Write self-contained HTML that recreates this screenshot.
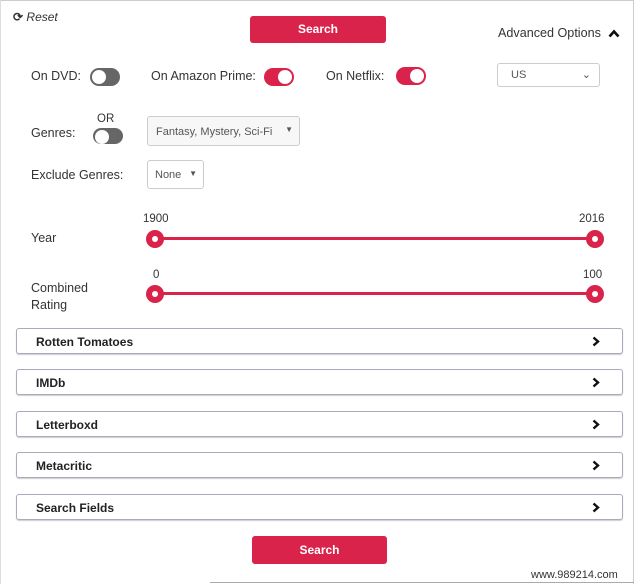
<!DOCTYPE html><html><head><style>
body{margin:0;width:638px;height:584px;background:#fff;font-family:"Liberation Sans",sans-serif;color:#333;position:relative;overflow:hidden}
.a{position:absolute}
.btn{position:absolute;background:#d9234b;color:#fff;border-radius:3px;font-size:12px;text-align:center;font-weight:bold}
.lbl{position:absolute;font-size:12.5px;color:#333}
.tg{position:absolute;width:30px;height:18px;border-radius:9px;background:#666}
.tg::after{content:"";position:absolute;top:2px;width:14px;height:14px;border-radius:50%;background:#fff}
.off::after{left:2px}.on{background:#d9234b}.on::after{right:2px}
.sel{position:absolute;border:1px solid #ccc;border-radius:3px;background:#f7f7f7;font-size:11px;color:#555;box-sizing:border-box}
.acc{position:absolute;left:16px;width:607px;height:26px;border:1px solid #aab;border-radius:3px;box-sizing:border-box;font-size:12px;font-weight:bold;color:#222;box-shadow:0 1px 1px #ccc}
.acc span{position:absolute;left:19px;top:6px}
.acc svg{position:absolute;right:22px;top:7px}
.track{position:absolute;height:3px;background:#d9234b}
.h{position:absolute;width:18px;height:18px;border-radius:50%;background:#d9234b}
.h::after{content:"";position:absolute;left:6px;top:6px;width:6px;height:6px;border-radius:50%;background:#fff}
.n{position:absolute;font-size:11.5px;color:#333}
</style></head><body>
<div class="a" style="left:0;top:0;width:633px;height:1px;background:#ccc"></div>
<div class="a" style="left:633px;top:0;width:1px;height:584px;background:#ccc"></div>
<div class="a" style="left:0;top:0;width:1px;height:584px;background:#ddd"></div>
<div class="a" style="left:13px;top:10px;font-size:12px;font-style:italic;color:#333"><b style="font-style:normal">⟳</b> Reset</div>
<div class="btn" style="left:250px;top:16px;width:136px;height:27px;line-height:27px">Search</div>
<div class="lbl" style="left:498px;top:26px;font-size:12.6px">Advanced Options</div>
<svg class="a" style="left:608px;top:29px" width="12" height="9" viewBox="0 0 12 9"><path d="M1.5 7.5L6 2.5L10.5 7.5" fill="none" stroke="#111" stroke-width="2.6"/></svg>
<div class="lbl" style="left:31px;top:69px">On DVD:</div><div class="tg off" style="left:90px;top:68px"></div>
<div class="lbl" style="left:151px;top:69px">On Amazon Prime:</div><div class="tg on" style="left:264px;top:68px"></div>
<div class="lbl" style="left:326px;top:69px">On Netflix:</div><div class="tg on" style="left:396px;top:67px"></div>
<div class="sel" style="left:497px;top:63px;width:103px;height:24px;background:#fff;padding:5px 0 0 13px">US<span style="position:absolute;right:8px;top:4px">⌄</span></div>
<div class="lbl" style="left:31px;top:126px">Genres:</div>
<div class="n" style="left:97px;top:113px">OR</div><div class="tg off" style="left:93px;top:128px;height:16px"></div>
<div class="sel" style="left:147px;top:116px;width:153px;height:30px;padding:9px 0 0 8px">Fantasy, Mystery, Sci-Fi <span style="position:absolute;right:6px;top:8px;font-size:8px">▼</span></div>
<div class="lbl" style="left:31px;top:168px">Exclude Genres:</div>
<div class="sel" style="left:147px;top:160px;width:57px;height:29px;background:#fff;padding:8px 0 0 7px">None <span style="position:absolute;right:6px;top:8px;font-size:8px">▼</span></div>
<div class="lbl" style="left:31px;top:231px">Year</div>
<div class="n" style="left:143px;top:213px">1900</div><div class="n" style="left:579px;top:213px">2016</div>
<div class="track" style="left:155px;top:237px;width:440px"></div>
<div class="h" style="left:146px;top:230px"></div><div class="h" style="left:586px;top:230px"></div>
<div class="lbl" style="left:31px;top:280px;line-height:17px">Combined<br>Rating</div>
<div class="n" style="left:153px;top:269px">0</div><div class="n" style="left:583px;top:269px">100</div>
<div class="track" style="left:155px;top:292px;width:440px"></div>
<div class="h" style="left:146px;top:285px"></div><div class="h" style="left:586px;top:285px"></div>
<div class="acc" style="top:328px"><span>Rotten Tomatoes</span><svg width="8" height="11" viewBox="0 0 8 11"><path d="M1.5 1.5L6 5.5L1.5 9.5" fill="none" stroke="#111" stroke-width="2.4"/></svg></div>
<div class="acc" style="top:369px"><span>IMDb</span><svg width="8" height="11" viewBox="0 0 8 11"><path d="M1.5 1.5L6 5.5L1.5 9.5" fill="none" stroke="#111" stroke-width="2.4"/></svg></div>
<div class="acc" style="top:411px"><span>Letterboxd</span><svg width="8" height="11" viewBox="0 0 8 11"><path d="M1.5 1.5L6 5.5L1.5 9.5" fill="none" stroke="#111" stroke-width="2.4"/></svg></div>
<div class="acc" style="top:452px"><span>Metacritic</span><svg width="8" height="11" viewBox="0 0 8 11"><path d="M1.5 1.5L6 5.5L1.5 9.5" fill="none" stroke="#111" stroke-width="2.4"/></svg></div>
<div class="acc" style="top:494px"><span>Search Fields</span><svg width="8" height="11" viewBox="0 0 8 11"><path d="M1.5 1.5L6 5.5L1.5 9.5" fill="none" stroke="#111" stroke-width="2.4"/></svg></div>
<div class="btn" style="left:252px;top:536px;width:135px;height:28px;line-height:28px">Search</div>
<div class="a" style="left:210px;top:582px;width:424px;height:1px;background:#aaa"></div>
<div class="a" style="left:531px;top:569px;font-size:11px;color:#333">www.989214.com</div>
</body></html>
